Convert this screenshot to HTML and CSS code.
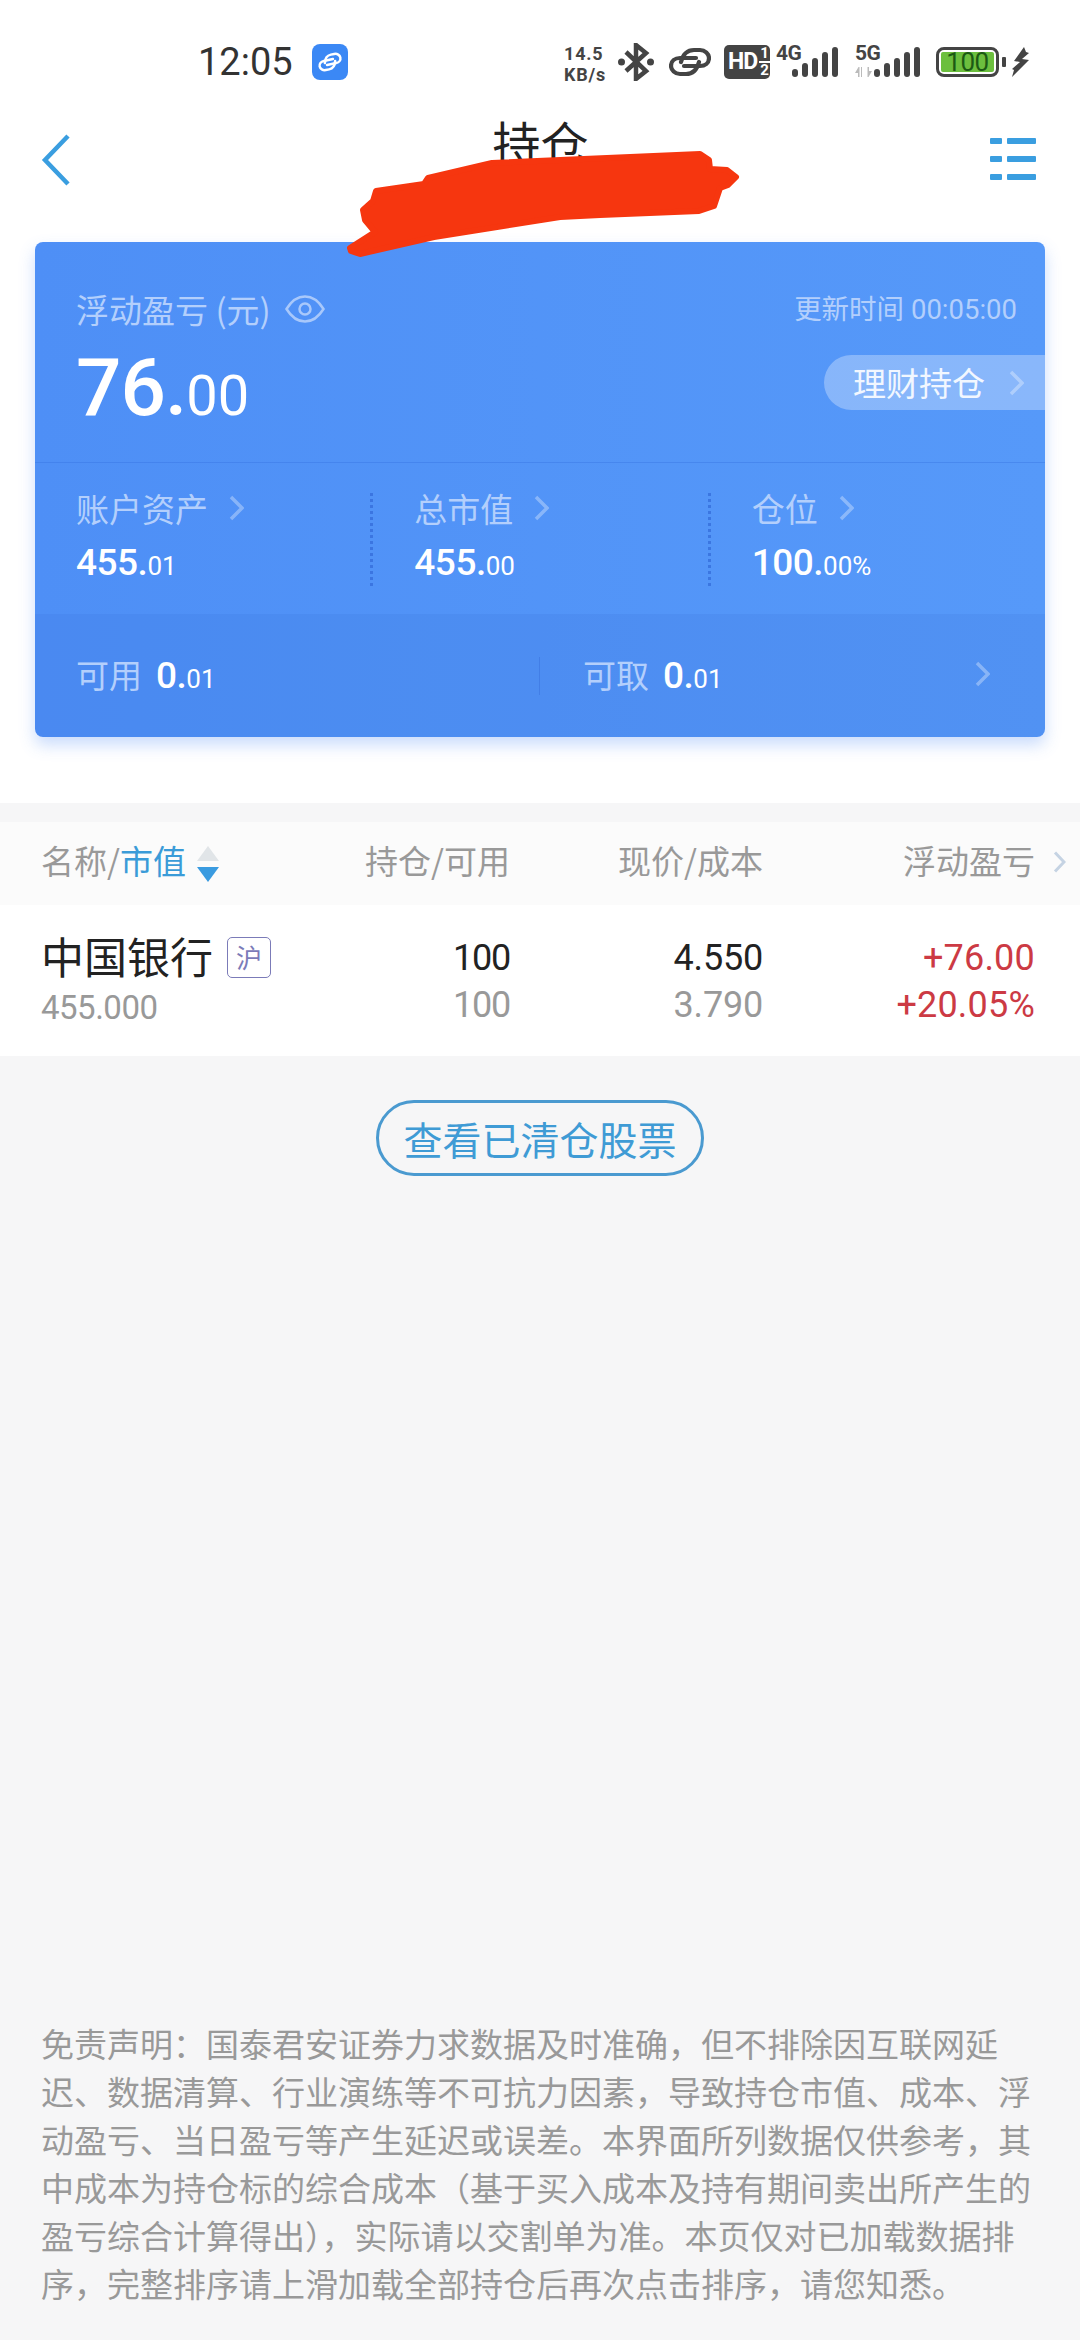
FILE: index.html
```html
<!DOCTYPE html>
<html lang="zh-CN">
<head>
<meta charset="utf-8">
<title>持仓</title>
<link rel="stylesheet" href="styles.css">
</head>
<body>
<div class="page">
  <div class="status">
    <span class="time">12:05</span>
    <span class="app-badge">
      <svg width="36" height="36" viewBox="0 0 42 42" fill="none" stroke="#fff" stroke-width="4.200" stroke-linecap="round"><g transform="translate(21 21) rotate(-12) scale(.68) translate(-21 -15)"><path d="M12 15C14 7 18 3 25 3H31C36 3 40 7 40 11C40 16 36 19 31 19H15"/><path d="M30 15C28 23 24 27 17 27H11C6 27 2 23 2 19C2 14 6 11 11 11H27"/></g></svg>
    </span>
    <div class="status-right">
      <span class="speed">14.5<br>KB/s</span>
      <svg class="bt" width="36" height="38" viewBox="0 0 36 38" fill="none" stroke="#444" stroke-width="4.500"><path d="M8 9L28 28L18 36V2L28 10L8 28"/><circle cx="3.500" cy="19" r="3.500" fill="#444" stroke="none"/><circle cx="32.500" cy="19" r="3.500" fill="#444" stroke="none"/></svg>
      <svg class="link" width="42" height="30" viewBox="0 0 42 30" fill="none" stroke="#444" stroke-width="4.200" stroke-linecap="round"><path d="M12 15C14 7 18 3 25 3H31C36 3 40 7 40 11C40 16 36 19 31 19H15"/><path d="M30 15C28 23 24 27 17 27H11C6 27 2 23 2 19C2 14 6 11 11 11H27"/></svg>
      <span class="hd"><b>HD</b><span class="hd-nums"><span class="hd-top">1</span><span>2</span></span></span>
      <span class="net">
        <span class="net-label">4G</span>
        <svg width="47" height="30" viewBox="0 0 47 30" fill="#444"><rect x="0" y="22" width="6" height="8" rx="3"/><rect x="10" y="16" width="6" height="14" rx="3"/><rect x="20" y="11" width="6" height="19" rx="3"/><rect x="30" y="5" width="6" height="25" rx="3"/><rect x="40" y="0" width="6" height="30" rx="3"/></svg>
      </span>
      <span class="net net-5g">
        <span class="net-label">5G</span>
        <svg class="arrows" width="17" height="10" viewBox="0 0 17 10" fill="#bbb"><path d="M0 6l3.500-6 1 0v10H3V6zM17 4l-3.500 6h-1V0H14v4z"/><rect x="6" y="0" width="1" height="10"/></svg>
        <svg width="47" height="30" viewBox="0 0 47 30" fill="#444"><rect x="0" y="22" width="6" height="8" rx="3"/><rect x="10" y="16" width="6" height="14" rx="3"/><rect x="20" y="11" width="6" height="19" rx="3"/><rect x="30" y="5" width="6" height="25" rx="3"/><rect x="40" y="0" width="6" height="30" rx="3"/></svg>
      </span>
      <span class="battery"><span class="battery-fill">100</span></span>
      <span class="battery-nub"></span>
      <svg class="bolt" width="18" height="30" viewBox="0 0 18 30" fill="#444"><path d="M12 0L2 14l6 1-8 7 2 1-2 7 17-17-7-1 7-6-3-1z"/></svg>
    </div>
  </div>

  <div class="nav">
    <svg class="back" width="30" height="52" viewBox="0 0 30 52" fill="none" stroke="#3a9ee0" stroke-width="4.500"><path d="M27 2L4 26l23 24"/></svg>
    <h1 class="title">持仓</h1>
    <svg class="menu" width="46" height="42" viewBox="0 0 46 42" fill="#3a9ee0"><rect x="0" y="0" width="12" height="6" rx="1"/><rect x="17" y="0" width="29" height="6" rx="1"/><rect x="0" y="18" width="12" height="6" rx="1"/><rect x="17" y="18" width="29" height="6" rx="1"/><rect x="0" y="36" width="12" height="6" rx="1"/><rect x="17" y="36" width="29" height="6" rx="1"/></svg>
  </div>

  <section class="card">
    <div class="card-top">
      <div class="pl">
        <div class="pl-label">浮动盈亏 (元)
          <svg class="eye" width="40" height="28" viewBox="0 0 40 28" fill="none" stroke="#a8c8fb" stroke-width="2.500"><path d="M1.500 14C7 5 13 1.500 20 1.500S33 5 38.500 14C33 23 27 26.500 20 26.500S7 23 1.500 14z"/><circle cx="20" cy="14" r="5.500"/></svg>
        </div>
        <div class="pl-value">76.<small>00</small></div>
      </div>
      <div class="pl-side">
        <div class="updated">更新时间 00:05:00</div>
        <div class="pill">理财持仓
          <svg class="chev" width="15" height="26" viewBox="0 0 15 26"><path d="M2 2l11 11L2 24"/></svg>
        </div>
      </div>
    </div>
    <div class="stats">
      <div class="stat">
        <div class="stat-label">账户资产 <svg class="chev" width="15" height="26" viewBox="0 0 15 26"><path d="M2 2l11 11L2 24"/></svg></div>
        <div class="stat-value">455.<small>01</small></div>
      </div>
      <div class="stat">
        <div class="stat-label">总市值 <svg class="chev" width="15" height="26" viewBox="0 0 15 26"><path d="M2 2l11 11L2 24"/></svg></div>
        <div class="stat-value">455.<small>00</small></div>
      </div>
      <div class="stat">
        <div class="stat-label">仓位 <svg class="chev" width="15" height="26" viewBox="0 0 15 26"><path d="M2 2l11 11L2 24"/></svg></div>
        <div class="stat-value">100.<small>00%</small></div>
      </div>
    </div>
    <div class="funds">
      <div class="fund fund-a"><span class="fund-label">可用</span><span class="stat-value">0.<small>01</small></span></div>
      <div class="fund fund-b"><span class="fund-label">可取</span><span class="stat-value">0.<small>01</small></span>
        <svg class="chev fund-chev" width="15" height="26" viewBox="0 0 15 26"><path d="M2 2l11 11L2 24"/></svg>
      </div>
    </div>
  </section>

  <div class="strip"></div>

  <div class="thead">
    <div class="c1">名称/<span class="accent">市值</span>
      <svg class="sort" width="22" height="36" viewBox="0 0 22 36"><path d="M11 0l11 15H0z" fill="#e1e5e8"/><path d="M0 21h22L11 36z" fill="#3a9be0"/></svg>
    </div>
    <div class="c2">持仓/可用</div>
    <div class="c3">现价/成本</div>
    <div class="c4">浮动盈亏</div>
    <svg class="thead-chev" width="13" height="22" viewBox="0 0 13 22" fill="none" stroke="#c5d3e3" stroke-width="3"><path d="M2 1.500L11 11l-9 9.500"/></svg>
  </div>

  <div class="row">
    <div class="c1">
      <div class="name">中国银行<span class="tag">沪</span></div>
      <div class="sub">455.000</div>
    </div>
    <div class="c2"><div class="main">100</div><div class="sub">100</div></div>
    <div class="c3"><div class="main">4.550</div><div class="sub">3.790</div></div>
    <div class="c4 up"><div class="main">+76.00</div><div class="sub">+20.05%</div></div>
  </div>

  <div class="body-area">
    <button class="closed-btn">查看已清仓股票</button>
    <p class="notice">免责声明：国泰君安证券力求数据及时准确，但不排除因互联网延迟、数据清算、行业演练等不可抗力因素，导致持仓市值、成本、浮动盈亏、当日盈亏等产生延迟或误差。本界面所列数据仅供参考，其中成本为持仓标的综合成本（基于买入成本及持有期间卖出所产生的盈亏综合计算得出），实际请以交割单为准。本页仅对已加载数据排序，完整排序请上滑加载全部持仓后再次点击排序，请您知悉。</p>
  </div>

  <svg class="scribble" width="1080" height="300" viewBox="0 0 1080 300"><path fill="#f6360f" stroke="#f6360f" stroke-width="6" stroke-linejoin="round" d="M376 191L424 184L428 178L492 163L700 154L709 160L710 169L727 170L736 177L728 185L720 188L714 206L699 211L600 215L560 217L434 237L360 254L351 251L350 248L375 232L365 220L363 210L373 201z"/></svg>
</div>
</body>
</html>
```

FILE: styles.css
```css
* { box-sizing: border-box; }
html, body { margin: 0; padding: 0; }
body {
  width: 1080px;
  height: 2340px;
  overflow: hidden;
  font-family: Roboto, "Noto Sans CJK SC", sans-serif;
  background: #fff;
}
.page {
  position: relative;
  width: 1080px;
  height: 2340px;
  display: flex;
  flex-direction: column;
  background: #fff;
}

/* status bar */
.status {
  height: 90px;
  flex: none;
  display: flex;
  align-items: flex-start;
  padding: 44px 50px 0 198px;
  color: #333;
}
.time { font-size: 38px; line-height: 36px; width: 94px; color: #333; }
.app-badge {
  width: 36px; height: 36px; margin-left: 20px;
  background: #3b88f5; border-radius: 8px; display: block;
}
.app-badge svg { display: block; }
.status-right { margin-left: auto; display: flex; align-items: flex-start; height: 40px; }
.speed { width: 46px; font-size: 18px; line-height: 21px; font-weight: 700; color: #444; margin-top: -1px; white-space: nowrap; letter-spacing: .8px; }
.bt { margin-left: 8px; margin-top: -1px; }
.link { margin-left: 15px; margin-top: 3px; }
.hd {
  width: 46px; height: 34px; margin-left: 13px; margin-top: 1px;
  background: #444; border-radius: 5px; color: #fff;
  display: flex; align-items: center; padding-left: 4px;
}
.hd b { font-size: 23px; letter-spacing: -1px; line-height: 34px; }
.hd-nums { font-size: 15px; line-height: 15px; font-weight: 700; margin-left: 2px; text-align: center; display: flex; flex-direction: column; width: 12px; }
.hd-top { border-bottom: 2px solid #fff; }
.net { position: relative; display: block; width: 63px; height: 34px; margin-left: 6px; }
.net svg { position: absolute; right: 0; bottom: 1px; }
.net-5g { margin-left: 16px; width: 66px; }
.net .arrows { left: 0; right: auto; bottom: 1px; }
.net-label { position: absolute; left: 0; top: 0; font-size: 21px; line-height: 18px; font-weight: 700; color: #444; letter-spacing: -.5px; }
.battery {
  width: 63px; height: 30px; margin-left: 15px; margin-top: 3px;
  border: 3px solid #444; border-radius: 8px; padding: 2px;
  display: block;
}
.battery-fill {
  display: block; height: 20px; background: #6cbf3e; border-radius: 2px;
  font-size: 26px; line-height: 20px; text-align: center; color: #1c5a14; letter-spacing: -.5px;
}
.battery-nub { width: 4px; height: 10px; margin: 13px 0 0 3px; background: #444; border-radius: 1px; }
.bolt { margin-left: 6px; margin-top: 3px; }

/* nav */
.nav {
  height: 152px; flex: none;
  display: flex; align-items: flex-start;
  padding: 0 44px 0 41px;
  position: relative;
}
.back { margin-top: 44px; }
.title {
  margin: 23px auto 0; font-size: 48px; line-height: 56px; font-weight: 400; color: #222;
  font-family: "Noto Sans CJK SC", sans-serif;
  padding-left: 20px;
}
.menu { margin-top: 48px; }

/* card */
.card {
  flex: none;
  margin: 0 35px;
  height: 495px;
  border-radius: 8px;
  background: linear-gradient(90deg, #4e8ff6, #5699f9);
  box-shadow: 0 8px 16px rgba(80, 140, 245, .3);
  color: #fff;
  display: flex;
  flex-direction: column;
}
.card-top {
  height: 221px; flex: none;
  display: flex; justify-content: space-between;
  border-bottom: 1px solid rgba(50, 110, 220, .35);
  padding-left: 41px;
}
.pl-label {
  margin-top: 47px; font-size: 33px; line-height: 40px; color: #b3cffc;
  font-family: "Noto Sans CJK SC", sans-serif; display: flex; align-items: center;
}
.eye { margin-left: 14px; }
.pl-value { font-size: 80px; line-height: 84px; margin-top: 17px; font-weight: 500; letter-spacing: -1px; }
.pl-value small { font-size: 56px; font-weight: 400; letter-spacing: 0; }
.pl-side { display: flex; flex-direction: column; align-items: flex-end; }
.updated { margin-top: 48px; padding-right: 28px; font-size: 27.500px; line-height: 40px; color: #b3cffc; }
.pill {
  margin-top: 25px; width: 221px; height: 55px;
  border-radius: 28px 0 0 28px;
  background: rgba(255, 255, 255, .3);
  padding-left: 29px; font-size: 33px; line-height: 55px; color: #f2f7ff;
  font-family: "Noto Sans CJK SC", sans-serif;
  display: flex; align-items: center; gap: 24px;
}
.chev { fill: none; stroke: rgba(255, 255, 255, .32); stroke-width: 3.500px; flex: none; }
.stats { height: 151px; flex: none; display: flex; padding-top: 30px; }
.stat { width: 338px; padding-left: 41px; height: 93px; border-left: 3px dotted rgba(50, 105, 215, .7); }
.stat:first-child { width: 336px; padding-left: 41px; border-left: 0; }
.stat-label {
  font-size: 33px; line-height: 38px; color: #b3cffc; margin-top: -4px;
  font-family: "Noto Sans CJK SC", sans-serif; display: flex; align-items: center; gap: 21px;
}
.stat-value { font-size: 37px; line-height: 44px; margin-top: 14px; font-weight: 500; color: #fff; display: block; letter-spacing: -.5px; }
.stat-value small { font-size: 26px; font-weight: 400; letter-spacing: 0; }
.funds {
  flex: 1; display: flex; align-items: center;
  background: rgba(40, 90, 200, .1);
  border-radius: 0 0 8px 8px;
}
.fund { display: flex; align-items: center; }
.fund .stat-value { margin: 4px 0 0 14px; }
.fund-a { width: 505px; padding-left: 41px; border-right: 1px solid rgba(50, 105, 215, .4); height: 38px; }
.fund-b { flex: 1; padding-left: 43px; padding-right: 55px; }
.fund-label { font-size: 33px; color: #b3cffc; font-family: "Noto Sans CJK SC", sans-serif; margin-top: -3px; }
.fund-chev { margin-left: auto; margin-top: -3px; }

/* table */
.strip { height: 19px; flex: none; margin-top: 66px; background: #f6f6f7; }
.thead, .row { flex: none; display: flex; }
.thead {
  height: 83px; background: #fbfbfb; align-items: flex-start; padding-top: 15px;
  font-size: 33px; line-height: 47px; color: #999; font-family: "Noto Sans CJK SC", sans-serif;
}
.c1 { width: 315px; padding-left: 41px; flex: none; }
.c2 { width: 195px; flex: none; text-align: right; }
.c3 { width: 253px; flex: none; text-align: right; }
.c4 { width: 272px; flex: none; text-align: right; }
.thead .c1 { display: flex; align-items: center; }
.accent { color: #3a9bd8; }
.sort { margin-left: 11px; margin-top: 6px; }
.thead-chev { margin-left: 18px; margin-top: 14px; }
.row { height: 151px; background: #fff; padding-top: 30px; }
.name {
  font-size: 43px; line-height: 48px; color: #222; margin-top: -4px;
  font-family: "Noto Sans CJK SC", sans-serif; display: flex; align-items: center;
}
.tag {
  width: 44px; height: 41px; margin-left: 14px; margin-top: 4px;
  border: 1px solid #7b7bb8; border-radius: 5px;
  font-size: 26px; line-height: 38px; text-align: center; color: #7b7bb8;
}
.main { font-size: 36px; line-height: 47px; color: #222; font-weight: 400; letter-spacing: -1.200px; }
.sub { font-size: 36px; line-height: 47px; color: #999; letter-spacing: -1.200px; }
.c1 .sub { font-size: 33px; line-height: 44px; letter-spacing: -.5px; margin-top: 7px; }
.c3 .main, .c3 .sub { letter-spacing: -.2px; }
.up .main, .up .sub { color: #cc3a44; letter-spacing: .2px; }

/* lower */
.body-area {
  flex: 1;
  background: #f6f6f7;
  display: flex; flex-direction: column; align-items: center;
}
.closed-btn {
  margin-top: 44px; width: 328px; height: 76px;
  border: 3px solid #4a9ad0; border-radius: 38px; background: transparent;
  color: #3f9bd5; font-size: 39px; padding: 0;
  font-family: "Noto Sans CJK SC", sans-serif;
}
.notice {
  margin: auto 0 33px; width: 1080px; padding: 0 49px 0 41px;
  font-size: 33px; line-height: 48px; color: #999;
  font-family: "Noto Sans CJK SC", sans-serif;
}

.scribble { position: absolute; left: 0; top: 0; pointer-events: none; }
```
